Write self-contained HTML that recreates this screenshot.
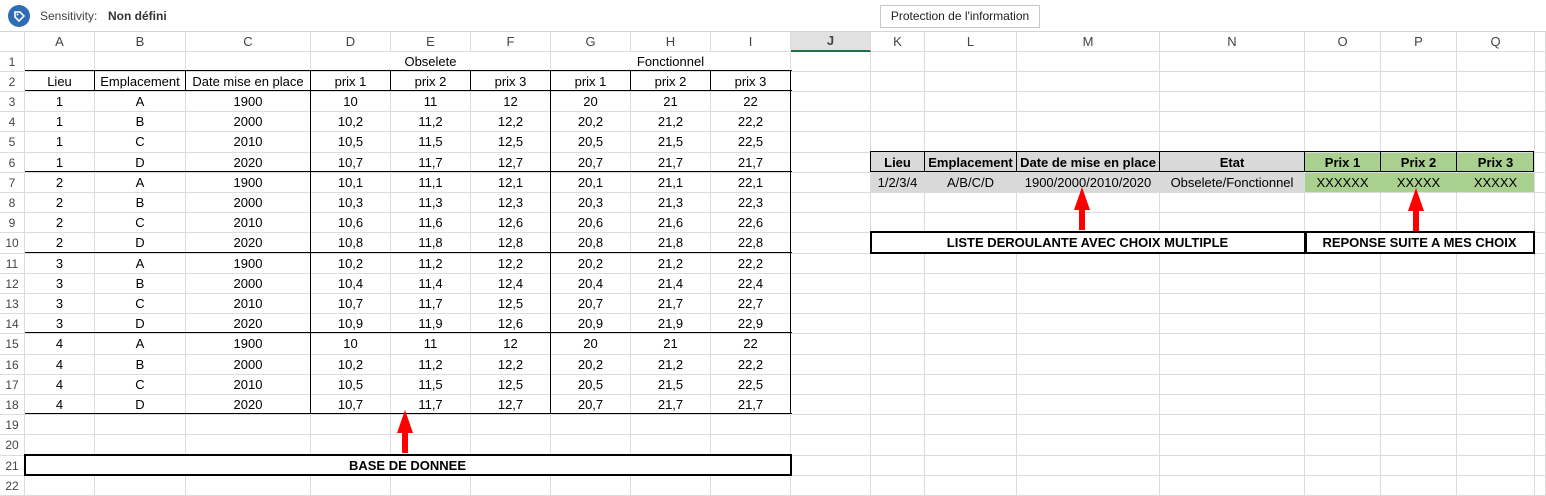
<!DOCTYPE html>
<html><head><meta charset="utf-8"><style>
*{margin:0;padding:0;box-sizing:border-box}
body{width:1546px;height:494px;overflow:hidden;background:#fff;font-family:"Liberation Sans",Arial,sans-serif;font-size:13px;color:#000;position:relative}
.top{position:absolute;left:0;top:0;width:1546px;height:32px;border-bottom:1px solid #d4d4d4;background:#fff}
.ic{position:absolute;left:8px;top:5px;width:22px;height:22px;border-radius:50%;background:#2e6db4}
.sen{position:absolute;left:40px;top:9px;font-size:12px;color:#444}
.nd{position:absolute;left:108px;top:9px;font-size:12px;font-weight:bold;color:#333}
.btn{position:absolute;left:880px;top:5px;width:160px;height:23px;border:1px solid #c8c8c8;background:#fff;font-size:12px;text-align:center;line-height:21px;color:#222}
table{position:absolute;left:0;top:32px;border-collapse:separate;border-spacing:0;table-layout:fixed;width:1546px}
td{border-right:1px solid #dadcdd;border-bottom:1px solid #dadcdd;padding:0;text-align:center;white-space:nowrap;overflow:hidden;line-height:18px}
tr.h td{height:19px;color:#444;font-size:13px}
td.rh{color:#444;text-align:center;font-size:12px}
tr.r td{height:20px}
tr.t td{height:21px}
.g{background:#d9d9d9}
.gr{background:#a9d08e}
.b{font-weight:bold}
.J{background:#e1e1e1;color:#217346;font-weight:bold;border-bottom:2px solid #217346}
.l{position:absolute;background:#000}
.box{position:absolute;border:2px solid #000}
</style></head><body>
<div class="top"><div class="ic"><svg width="22" height="22" viewBox="0 0 22 22"><path d="M7 7 L12 7 L16 11 L11 16 L7 12 Z" fill="none" stroke="#fff" stroke-width="1.6"/><circle cx="9.5" cy="9.5" r="1" fill="#fff"/></svg></div><div class="sen">Sensitivity:</div><div class="nd">Non défini</div><div class="btn">Protection de l'information</div></div>
<table>
<colgroup><col style="width:25px"><col style="width:70px"><col style="width:91px"><col style="width:125px"><col style="width:80px"><col style="width:80px"><col style="width:80px"><col style="width:80px"><col style="width:80px"><col style="width:80px"><col style="width:80px"><col style="width:54px"><col style="width:92px"><col style="width:143px"><col style="width:145px"><col style="width:76px"><col style="width:76px"><col style="width:78px"><col style="width:11px"></colgroup>
<tr class="h"><td></td><td>A</td><td>B</td><td>C</td><td>D</td><td>E</td><td>F</td><td>G</td><td>H</td><td>I</td><td class="J">J</td><td>K</td><td>L</td><td>M</td><td>N</td><td>O</td><td>P</td><td>Q</td><td></td></tr>
<tr class="r"><td class="rh">1</td><td></td><td></td><td></td><td colspan="3">Obselete</td><td colspan="3">Fonctionnel</td><td></td><td></td><td></td><td></td><td></td><td></td><td></td><td></td><td></td></tr>
<tr class="r"><td class="rh">2</td><td>Lieu</td><td>Emplacement</td><td>Date mise en place</td><td>prix 1</td><td>prix 2</td><td>prix 3</td><td>prix 1</td><td>prix 2</td><td>prix 3</td><td></td><td></td><td></td><td></td><td></td><td></td><td></td><td></td><td></td></tr>
<tr class="r"><td class="rh">3</td><td>1</td><td>A</td><td>1900</td><td>10</td><td>11</td><td>12</td><td>20</td><td>21</td><td>22</td><td></td><td></td><td></td><td></td><td></td><td></td><td></td><td></td><td></td></tr>
<tr class="r"><td class="rh">4</td><td>1</td><td>B</td><td>2000</td><td>10,2</td><td>11,2</td><td>12,2</td><td>20,2</td><td>21,2</td><td>22,2</td><td></td><td></td><td></td><td></td><td></td><td></td><td></td><td></td><td></td></tr>
<tr class="t"><td class="rh">5</td><td>1</td><td>C</td><td>2010</td><td>10,5</td><td>11,5</td><td>12,5</td><td>20,5</td><td>21,5</td><td>22,5</td><td></td><td></td><td></td><td></td><td></td><td></td><td></td><td></td><td></td></tr>
<tr class="r"><td class="rh">6</td><td>1</td><td>D</td><td>2020</td><td>10,7</td><td>11,7</td><td>12,7</td><td>20,7</td><td>21,7</td><td>21,7</td><td></td><td class="g b">Lieu</td><td class="g b">Emplacement</td><td class="g b">Date de mise en place</td><td class="g b">Etat</td><td class="gr b">Prix 1</td><td class="gr b">Prix 2</td><td class="gr b">Prix 3</td><td></td></tr>
<tr class="r"><td class="rh">7</td><td>2</td><td>A</td><td>1900</td><td>10,1</td><td>11,1</td><td>12,1</td><td>20,1</td><td>21,1</td><td>22,1</td><td></td><td class="g" style="border-right-color:#d9d9d9">1/2/3/4</td><td class="g" style="border-right-color:#d9d9d9">A/B/C/D</td><td class="g" style="border-right-color:#d9d9d9">1900/2000/2010/2020</td><td class="g">Obselete/Fonctionnel</td><td class="gr" style="border-right-color:#a9d08e">XXXXXX</td><td class="gr" style="border-right-color:#a9d08e">XXXXX</td><td class="gr">XXXXX</td><td></td></tr>
<tr class="r"><td class="rh">8</td><td>2</td><td>B</td><td>2000</td><td>10,3</td><td>11,3</td><td>12,3</td><td>20,3</td><td>21,3</td><td>22,3</td><td></td><td></td><td></td><td></td><td></td><td></td><td></td><td></td><td></td></tr>
<tr class="r"><td class="rh">9</td><td>2</td><td>C</td><td>2010</td><td>10,6</td><td>11,6</td><td>12,6</td><td>20,6</td><td>21,6</td><td>22,6</td><td></td><td></td><td></td><td></td><td></td><td></td><td></td><td></td><td></td></tr>
<tr class="t"><td class="rh">10</td><td>2</td><td>D</td><td>2020</td><td>10,8</td><td>11,8</td><td>12,8</td><td>20,8</td><td>21,8</td><td>22,8</td><td></td><td colspan="4" class="b">LISTE DEROULANTE AVEC CHOIX MULTIPLE</td><td colspan="3" class="b">REPONSE SUITE A MES CHOIX</td><td></td></tr>
<tr class="r"><td class="rh">11</td><td>3</td><td>A</td><td>1900</td><td>10,2</td><td>11,2</td><td>12,2</td><td>20,2</td><td>21,2</td><td>22,2</td><td></td><td></td><td></td><td></td><td></td><td></td><td></td><td></td><td></td></tr>
<tr class="r"><td class="rh">12</td><td>3</td><td>B</td><td>2000</td><td>10,4</td><td>11,4</td><td>12,4</td><td>20,4</td><td>21,4</td><td>22,4</td><td></td><td></td><td></td><td></td><td></td><td></td><td></td><td></td><td></td></tr>
<tr class="r"><td class="rh">13</td><td>3</td><td>C</td><td>2010</td><td>10,7</td><td>11,7</td><td>12,5</td><td>20,7</td><td>21,7</td><td>22,7</td><td></td><td></td><td></td><td></td><td></td><td></td><td></td><td></td><td></td></tr>
<tr class="r"><td class="rh">14</td><td>3</td><td>D</td><td>2020</td><td>10,9</td><td>11,9</td><td>12,6</td><td>20,9</td><td>21,9</td><td>22,9</td><td></td><td></td><td></td><td></td><td></td><td></td><td></td><td></td><td></td></tr>
<tr class="t"><td class="rh">15</td><td>4</td><td>A</td><td>1900</td><td>10</td><td>11</td><td>12</td><td>20</td><td>21</td><td>22</td><td></td><td></td><td></td><td></td><td></td><td></td><td></td><td></td><td></td></tr>
<tr class="r"><td class="rh">16</td><td>4</td><td>B</td><td>2000</td><td>10,2</td><td>11,2</td><td>12,2</td><td>20,2</td><td>21,2</td><td>22,2</td><td></td><td></td><td></td><td></td><td></td><td></td><td></td><td></td><td></td></tr>
<tr class="r"><td class="rh">17</td><td>4</td><td>C</td><td>2010</td><td>10,5</td><td>11,5</td><td>12,5</td><td>20,5</td><td>21,5</td><td>22,5</td><td></td><td></td><td></td><td></td><td></td><td></td><td></td><td></td><td></td></tr>
<tr class="r"><td class="rh">18</td><td>4</td><td>D</td><td>2020</td><td>10,7</td><td>11,7</td><td>12,7</td><td>20,7</td><td>21,7</td><td>21,7</td><td></td><td></td><td></td><td></td><td></td><td></td><td></td><td></td><td></td></tr>
<tr class="r"><td class="rh">19</td><td></td><td></td><td></td><td></td><td></td><td></td><td></td><td></td><td></td><td></td><td></td><td></td><td></td><td></td><td></td><td></td><td></td><td></td></tr>
<tr class="t"><td class="rh">20</td><td></td><td></td><td></td><td></td><td></td><td></td><td></td><td></td><td></td><td></td><td></td><td></td><td></td><td></td><td></td><td></td><td></td><td></td></tr>
<tr class="r"><td class="rh">21</td><td colspan="9" class="b">BASE DE DONNEE</td><td></td><td></td><td></td><td></td><td></td><td></td><td></td><td></td><td></td></tr>
<tr class="r"><td class="rh">22</td><td></td><td></td><td></td><td></td><td></td><td></td><td></td><td></td><td></td><td></td><td></td><td></td><td></td><td></td><td></td><td></td><td></td><td></td></tr>
</table>
<!-- left table borders -->
<div class="l" style="left:25px;top:70px;width:767px;height:1px"></div>
<div class="l" style="left:25px;top:90px;width:767px;height:1px"></div>
<div class="l" style="left:25px;top:171px;width:767px;height:1px"></div>
<div class="l" style="left:25px;top:252px;width:767px;height:1px"></div>
<div class="l" style="left:25px;top:332px;width:767px;height:1px"></div>
<div class="l" style="left:25px;top:413px;width:767px;height:1px"></div>
<div class="l" style="left:94px;top:70px;width:1px;height:21px"></div>
<div class="l" style="left:185px;top:70px;width:1px;height:21px"></div>
<div class="l" style="left:390px;top:70px;width:1px;height:21px"></div>
<div class="l" style="left:470px;top:70px;width:1px;height:21px"></div>
<div class="l" style="left:630px;top:70px;width:1px;height:21px"></div>
<div class="l" style="left:710px;top:70px;width:1px;height:21px"></div>
<div class="l" style="left:310px;top:70px;width:1px;height:344px"></div>
<div class="l" style="left:550px;top:70px;width:1px;height:344px"></div>
<div class="l" style="left:790px;top:70px;width:1px;height:344px"></div>
<!-- right table header borders -->
<div class="l" style="left:870px;top:151px;width:664px;height:1px"></div>
<div class="l" style="left:870px;top:171px;width:664px;height:1px"></div>
<div class="l" style="left:870px;top:151px;width:1px;height:21px"></div>
<div class="l" style="left:924px;top:151px;width:1px;height:21px"></div>
<div class="l" style="left:1016px;top:151px;width:1px;height:21px"></div>
<div class="l" style="left:1159px;top:151px;width:1px;height:21px"></div>
<div class="l" style="left:1304px;top:151px;width:1px;height:21px"></div>
<div class="l" style="left:1380px;top:151px;width:1px;height:21px"></div>
<div class="l" style="left:1456px;top:151px;width:1px;height:21px"></div>
<div class="l" style="left:1533px;top:151px;width:1px;height:21px"></div>
<!-- thick boxes -->
<div class="box" style="left:870px;top:231px;width:437px;height:23px"></div>
<div class="box" style="left:1304px;top:231px;width:231px;height:23px"></div>
<div class="box" style="left:24px;top:454px;width:768px;height:22px"></div>
<!-- arrows -->
<svg style="position:absolute;left:0;top:0" width="1546" height="494">
<polygon points="405,410 413,433 408,433 408,453 402,453 402,433 397,433" fill="#ff0000"/>
<polygon points="1082,187 1090,210 1085,210 1085,230 1079,230 1079,210 1074,210" fill="#ff0000"/>
<polygon points="1416,188 1424,211 1419,211 1419,231 1413,231 1413,211 1408,211" fill="#ff0000"/>
</svg>
</body></html>
